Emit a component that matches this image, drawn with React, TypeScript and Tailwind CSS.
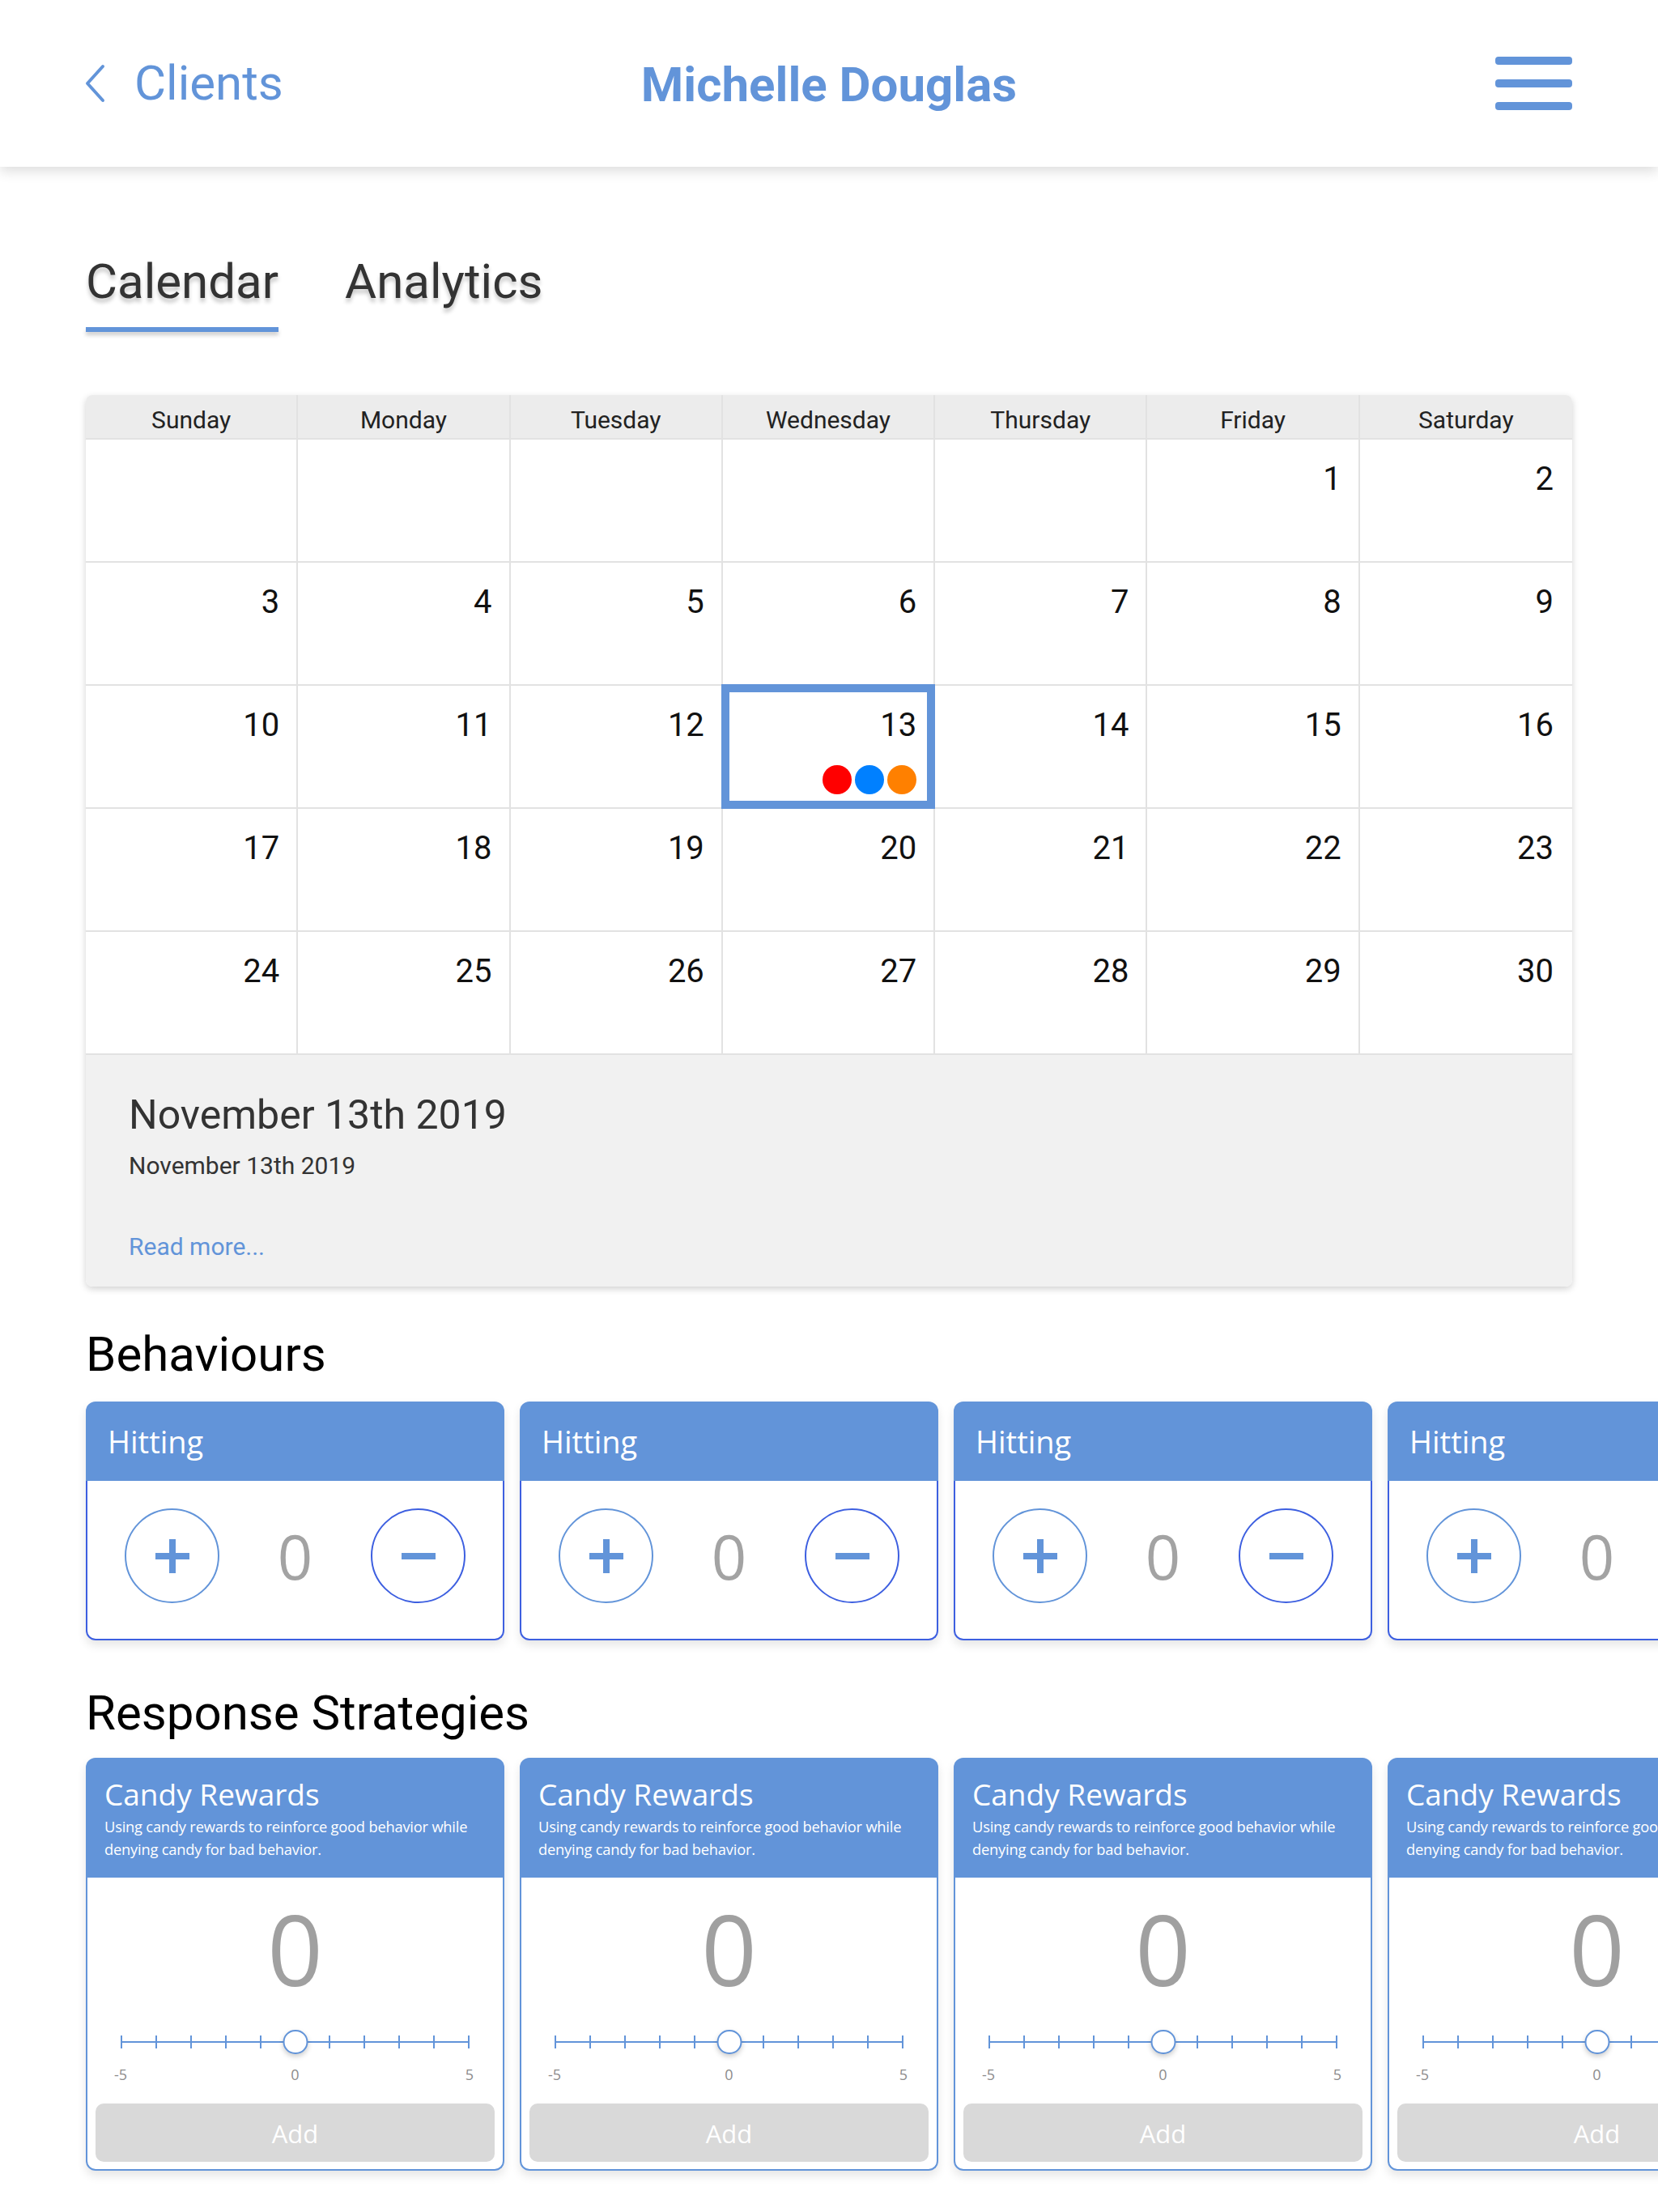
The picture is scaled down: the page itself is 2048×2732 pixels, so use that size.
const BLUE = '#6294d9';

const days = ['Sunday', 'Monday', 'Tuesday', 'Wednesday', 'Thursday', 'Friday', 'Saturday'];

// November 2019 starts on a Friday
const cells: (number | null)[] = [
  null, null, null, null, null, 1, 2,
  ...Array.from({ length: 28 }, (_, i) => i + 3),
];

function Header() {
  return (
    <header className="relative z-10 flex h-[206px] items-center justify-between bg-white px-[106px] shadow-[0_6px_14px_rgba(0,0,0,0.13)]">
      <div className="flex w-[400px] items-center gap-[36px] text-[#6294d9]">
        <svg width="26" height="48" viewBox="0 0 26 48" className="-ml-[2px]">
          <polyline points="23,3 4,24 23,45" fill="none" stroke={BLUE} strokeWidth="4" strokeLinecap="round" strokeLinejoin="round" />
        </svg>
        <span className="font-['Roboto',sans-serif] text-[60px] leading-none">Clients</span>
      </div>
      <h1 className="pt-[3px] font-['Roboto',sans-serif] text-[60px] leading-none font-bold text-[#6294d9]">Michelle Douglas</h1>
      <div className="flex w-[400px] justify-end">
        <div className="flex w-[95px] flex-col gap-[18px]">
          <div className="h-[10px] rounded-[4px] bg-[#6294d9]" />
          <div className="h-[10px] rounded-[4px] bg-[#6294d9]" />
          <div className="h-[10px] rounded-[4px] bg-[#6294d9]" />
        </div>
      </div>
    </header>
  );
}

function Tabs() {
  return (
    <div className="mt-[112px] flex gap-[82px] font-['Roboto',sans-serif] text-[60px] leading-none text-[#333]">
      <div className="flex flex-col">
        <span className="[text-shadow:0_5px_5px_rgba(0,0,0,0.22)]">Calendar</span>
        <div className="mt-[26px] h-[6px] bg-[#6294d9] shadow-[0_4px_5px_rgba(0,0,0,0.2)]" />
      </div>
      <span className="[text-shadow:0_5px_5px_rgba(0,0,0,0.22)]">Analytics</span>
    </div>
  );
}

function Calendar() {
  return (
    <div className="mt-[78px] overflow-hidden rounded-[8px] font-['Roboto',sans-serif] shadow-[0_3px_8px_rgba(0,0,0,0.18)]">
      <div className="grid h-[55px] grid-cols-7 border-b-2 border-[#e2e2e2] bg-[#ececec]">
        {days.map((d, i) => (
          <div key={d} className={`flex items-center justify-center pt-[8px] text-[30px] text-[#222] ${i < 6 ? 'border-r-2 border-[#e2e2e2]' : ''}`}>
            {d}
          </div>
        ))}
      </div>
      <div className="grid grid-cols-7 bg-white">
        {cells.map((n, i) => (
          <div
            key={i}
            className={`relative flex h-[152px] justify-end border-b-2 border-[#e2e2e2] pt-[29px] pr-[21px] text-[40px] leading-none text-[#111] ${i % 7 < 6 ? 'border-r-2' : 'pr-[23px]'}`}>
            {n}
            {n === 13 && (
              <>
                <div className="absolute -inset-[2px] border-[10px] border-[#6294d9]" />
                <div className="absolute right-[21px] bottom-[16px] flex gap-[4px]">
                  <div className="h-[36px] w-[36px] rounded-full bg-[#ff0000]" />
                  <div className="h-[36px] w-[36px] rounded-full bg-[#0080ff]" />
                  <div className="h-[36px] w-[36px] rounded-full bg-[#ff8000]" />
                </div>
              </>
            )}
          </div>
        ))}
      </div>
      <div className="flex flex-col bg-[#f1f1f1] px-[53px] pt-[49px] pb-[34px] leading-none">
        <div className="text-[50px] text-[#333]">November 13th 2019</div>
        <div className="mt-[23px] text-[30px] text-[#333]">November 13th 2019</div>
        <div className="mt-[70px] text-[30px] text-[#6294d9]">Read more...</div>
      </div>
    </div>
  );
}

function BehaviourCard() {
  return (
    <div className="flex w-[517px] shrink-0 flex-col rounded-[12px] font-['Open_Sans',sans-serif] shadow-[0_6px_12px_rgba(0,0,0,0.1)]">
      <div className="flex h-[98px] items-center rounded-t-[12px] bg-[#6294d9] px-[27px] text-[38px] leading-none text-white">Hitting</div>
      <div className="flex h-[197px] items-center justify-between rounded-b-[12px] border-x-2 border-b-2 border-[#3d5fe0] bg-white px-[46px] pb-[10px]">
        <div className="flex h-[117px] w-[117px] items-center justify-center rounded-full border-2 border-[#6294d9]">
          <svg width="42" height="42" viewBox="0 0 42 42">
            <rect x="0" y="17" width="42" height="8" fill={BLUE} />
            <rect x="17" y="0" width="8" height="42" fill={BLUE} />
          </svg>
        </div>
        <span className="text-[76px] leading-none text-[#a3a3a3]">0</span>
        <div className="flex h-[117px] w-[117px] items-center justify-center rounded-full border-2 border-[#3d5fe0]">
          <div className="h-[8px] w-[42px] bg-[#6294d9]" />
        </div>
      </div>
    </div>
  );
}

function Slider() {
  return (
    <div className="mx-[31px] flex flex-col">
      <div className="relative h-[30px]">
        <div className="absolute top-[14px] right-0 left-0 h-[2px] bg-[#6294d9]" />
        <div className="absolute top-[7px] right-0 left-0 flex justify-between">
          {Array.from({ length: 11 }, (_, i) => (
            <div key={i} className="h-[16px] w-[2px] bg-[#6294d9]" />
          ))}
        </div>
        <div className="absolute top-0 left-1/2 h-[30px] w-[31px] -translate-x-1/2 rounded-full border-2 border-[#6294d9] bg-white shadow-[0_3px_6px_rgba(0,0,0,0.2)]" />
      </div>
      <div className="mt-[16px] flex justify-between text-[18px] leading-none text-[#8c8c8c]">
        <span className="-ml-[10px] w-[20px] text-center">-5</span>
        <span>0</span>
        <span className="-mr-[10px] w-[20px] text-center">5</span>
      </div>
    </div>
  );
}

function StrategyCard() {
  return (
    <div className="flex w-[517px] shrink-0 flex-col rounded-[12px] font-['Open_Sans',sans-serif] shadow-[0_6px_12px_rgba(0,0,0,0.1)]">
      <div className="flex h-[148px] flex-col rounded-t-[12px] bg-[#6294d9] px-[23px] pt-[26px] text-white">
        <div className="text-[37px] leading-none">Candy Rewards</div>
        <div className="mt-[8px] text-[18.3px] leading-[28px] tracking-[-0.2px]">
          Using candy rewards to reinforce good behavior while denying candy for bad behavior.
        </div>
      </div>
      <div className="flex flex-col rounded-b-[12px] border-x-2 border-b-2 border-[#6294d9] bg-white px-[10px] pt-[28px] pb-[9px]">
        <div className="text-center text-[120px] leading-none text-[#a0a0a0]">0</div>
        <div className="mt-[40px]">
          <Slider />
        </div>
        <button className="mt-[27px] h-[72px] rounded-[10px] bg-[#d9d9d9] pt-[2px] text-[31px] text-white">Add</button>
      </div>
    </div>
  );
}

export default function App() {
  return (
    <main className="min-h-screen w-full overflow-hidden bg-white">
      <Header />
      <div className="px-[106px] pb-[60px]">
        <Tabs />
        <Calendar />
        <h2 className="mt-[54px] font-['Roboto',sans-serif] text-[60px] leading-none text-black">Behaviours</h2>
        <div className="mt-[28px] flex gap-[19px]">
          <BehaviourCard />
          <BehaviourCard />
          <BehaviourCard />
          <BehaviourCard />
        </div>
        <h2 className="mt-[60px] font-['Roboto',sans-serif] text-[60px] leading-none text-black">Response Strategies</h2>
        <div className="mt-[25px] flex gap-[19px]">
          <StrategyCard />
          <StrategyCard />
          <StrategyCard />
          <StrategyCard />
        </div>
      </div>
    </main>
  );
}
